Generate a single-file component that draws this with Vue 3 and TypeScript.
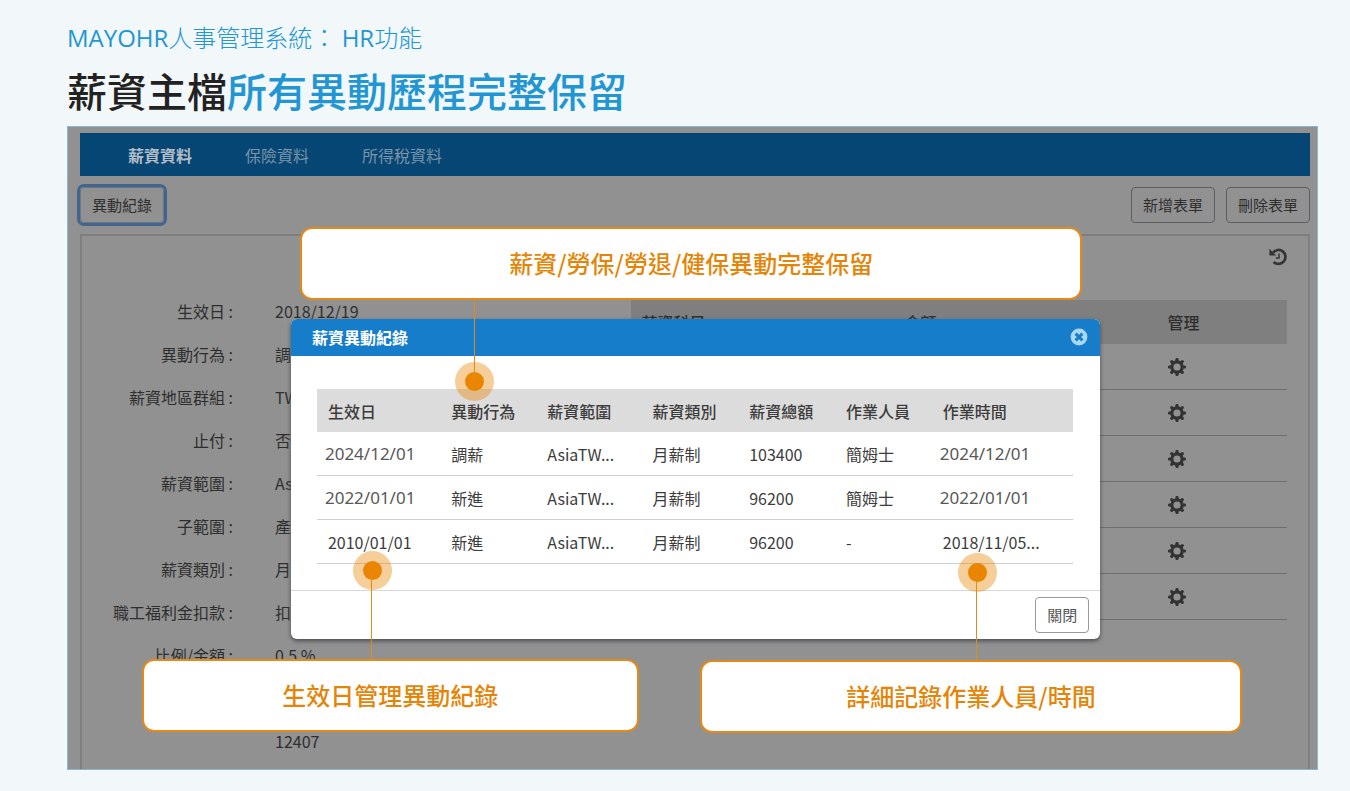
<script setup lang="ts">
interface Field {
  label: string
  value: string
}

interface SalaryRecord {
  effective: string
  action: string
  range: string
  type: string
  total: string
  operator: string
  time: string
  amended: boolean
}

const tabs: string[] = ['薪資資料', '保險資料', '所得稅資料']

const fields: Field[] = [
  { label: '生效日 :', value: '2018/12/19' },
  { label: '異動行為 :', value: '調薪' },
  { label: '薪資地區群組 :', value: 'TW' },
  { label: '止付 :', value: '否' },
  { label: '薪資範圍 :', value: 'AsiaTW' },
  { label: '子範圍 :', value: '產' },
  { label: '薪資類別 :', value: '月薪制' },
  { label: '職工福利金扣款 :', value: '扣' },
  { label: '比例/金額 :', value: '0.5 %' },
  { label: '', value: '' },
  { label: '', value: '12407' },
]

const columns: string[] = ['生效日', '異動行為', '薪資範圍', '薪資類別', '薪資總額', '作業人員', '作業時間']

const records: SalaryRecord[] = [
  { effective: '2024/12/01', action: '調薪', range: 'AsiaTW...', type: '月薪制', total: '103400', operator: '簡姆士', time: '2024/12/01', amended: true },
  { effective: '2022/01/01', action: '新進', range: 'AsiaTW...', type: '月薪制', total: '96200', operator: '簡姆士', time: '2022/01/01', amended: true },
  { effective: '2010/01/01', action: '新進', range: 'AsiaTW...', type: '月薪制', total: '96200', operator: '-', time: '2018/11/05...', amended: false },
]

const teeth: number[] = [0, 45, 90, 135, 180, 225, 270, 315]
</script>

<template>
  <main class="slide">
    <header class="heading">
      <p class="subtitle"><span class="latin">MAYOHR</span>人事管理系統： <span class="latin">HR</span>功能</p>
      <h1 class="title">薪資主檔<span class="accent">所有異動歷程完整保留</span></h1>
    </header>

    <section class="screen">
      <nav class="tabs">
        <a v-for="(tab, i) in tabs" :key="tab" href="#" class="tab" :class="{ active: i === 0 }">{{ tab }}</a>
      </nav>

      <div class="toolbar">
        <button type="button" class="btn focused">異動紀錄</button>
        <div class="toolbar-right">
          <button type="button" class="btn">新增表單</button>
          <button type="button" class="btn">刪除表單</button>
        </div>
      </div>

      <div class="card">
        <div class="card-top">
          <button type="button" class="icon-btn" aria-label="history">
            <svg width="18" height="18" viewBox="0 0 18 18" fill="none" stroke="#343434">
              <path d="M4 4.6A7 7 0 1 1 4.6 14" stroke-width="2.7" />
              <path d="M.4 .8v6.6h6.8z" fill="#343434" stroke="none" />
              <path d="M10 5.6v4.4H6.8" stroke-width="1.5" />
            </svg>
          </button>
        </div>
        <div class="card-body">
          <dl class="fields">
            <div v-for="(field, i) in fields" :key="i" class="field">
              <dt>{{ field.label }}</dt>
              <dd>{{ field.value }}</dd>
            </div>
          </dl>
          <table class="items">
            <thead>
              <tr>
                <th class="wide">薪資科目</th>
                <th class="wide">金額</th>
                <th>管理</th>
              </tr>
            </thead>
            <tbody>
              <tr v-for="n in 6" :key="n">
                <td></td>
                <td></td>
                <td>
                  <button type="button" class="icon-btn" aria-label="settings">
                    <svg width="18" height="18" viewBox="-9 -9 18 18" fill="none" stroke="#333">
                      <circle r="5.2" stroke-width="3.2" />
                      <path v-for="a in teeth" :key="a" d="M0 -6.2V-7.5" stroke-width="3.2" stroke-linecap="round" :transform="`rotate(${a})`" />
                    </svg>
                  </button>
                </td>
              </tr>
            </tbody>
          </table>
        </div>
      </div>

      <div class="modal" role="dialog" aria-labelledby="modal-title">
        <div class="modal-head">
          <h2 id="modal-title">薪資異動紀錄</h2>
          <button type="button" class="icon-btn" aria-label="close">
            <svg width="18" height="18" viewBox="0 0 18 18">
              <circle cx="9" cy="9" r="8.4" fill="#abd8f6" />
              <path d="M5.6 5.6l6.8 6.8M12.4 5.6l-6.8 6.8" stroke="#167dca" stroke-width="3" />
            </svg>
          </button>
        </div>
        <div class="modal-body">
          <table class="records">
            <colgroup>
              <col v-for="n in 7" :key="n" :class="`c${n}`" />
            </colgroup>
            <thead>
              <tr>
                <th v-for="c in columns" :key="c">{{ c }}</th>
              </tr>
            </thead>
            <tbody>
              <tr v-for="r in records" :key="r.effective">
                <td :class="{ amended: r.amended }">{{ r.effective }}</td>
                <td>{{ r.action }}</td>
                <td>{{ r.range }}</td>
                <td>{{ r.type }}</td>
                <td>{{ r.total }}</td>
                <td>{{ r.operator }}</td>
                <td :class="{ amended: r.amended }">{{ r.time }}</td>
              </tr>
            </tbody>
          </table>
        </div>
        <div class="modal-foot">
          <button type="button" class="btn close">關閉</button>
        </div>
      </div>

      <i class="pin up pin-action"></i>
      <i class="pin down pin-date"></i>
      <i class="pin down pin-time"></i>
      <div class="callout callout-action">薪資/勞保/勞退/健保異動完整保留</div>
      <div class="callout callout-date">生效日管理異動紀錄</div>
      <div class="callout callout-time">詳細記錄作業人員/時間</div>
    </section>
  </main>
</template>

<style>
body {
  margin: 0;
  background: #f2f8f9;
}
</style>

<style scoped>
.slide {
  box-sizing: border-box;
  min-height: 100vh;
  display: flex;
  flex-direction: column;
  padding: 21px 32px 21px 67px;
  background: #f2f8f9;
  color: #2e2e2e;
  font-family: "Noto Sans CJK TC", sans-serif;
  font-size: 16px;
  line-height: 24px;
}
.heading {
  margin-bottom: 8px;
}
.subtitle {
  margin: 0;
  color: #2296d3;
  font-size: 24px;
  line-height: 32px;
  font-weight: 300;
}
.latin {
  font-family: "Open Sans", sans-serif;
  font-weight: 400;
}
.title {
  margin: 8px 0 0;
  color: #222;
  font-size: 40px;
  line-height: 56px;
  font-weight: 500;
}
.accent {
  color: #2296d3;
}
.screen {
  position: relative;
  flex: 1;
  display: flex;
  flex-direction: column;
  overflow: hidden;
  padding: 6px 7px 0 12px;
  border: 1px solid #8db7c8;
  background: #919191;
}
.tabs {
  box-sizing: border-box;
  display: flex;
  align-items: center;
  gap: 53px;
  height: 43px;
  padding: 0 48px;
  background: #054674;
}
.tab {
  color: #7c94a8;
  text-decoration: none;
}
.tab.active {
  color: #b4bdc5;
  font-weight: 700;
}
.toolbar {
  display: flex;
  justify-content: space-between;
  padding: 11px 0;
}
.toolbar-right {
  display: flex;
  gap: 11px;
}
.btn {
  box-sizing: border-box;
  height: 36px;
  padding: 0 11px;
  border: 1px solid #5c5e62;
  border-radius: 4px;
  background: transparent;
  color: #2e2e2e;
  font: inherit;
  font-size: 15px;
}
.btn.focused {
  border-color: #6d7780;
  box-shadow: 0 0 0 3px #41658c;
}
.icon-btn {
  display: block;
  padding: 0;
  border: 0;
  background: none;
  line-height: 0;
}
.card {
  flex: 1;
  padding-right: 21px;
  border: 2px solid #7e7e7e;
  border-bottom: 0;
}
.card-top {
  display: flex;
  align-items: flex-start;
  justify-content: flex-end;
  height: 41px;
  padding-top: 12px;
}
.card-body {
  display: grid;
  grid-template-columns: 45.6% 1fr;
  align-items: start;
}
.fields {
  margin: 0;
}
.field {
  display: flex;
  gap: 42px;
  height: 43px;
  align-items: center;
}
.field dt {
  width: 151px;
  text-align: right;
}
.field dd {
  margin: 0;
}
table {
  width: 100%;
  border-collapse: collapse;
  table-layout: fixed;
}
th {
  padding: 0;
  text-align: left;
  font-weight: 500;
}
td {
  padding: 0;
}
.items {
  margin-top: 11px;
}
.items th {
  height: 44px;
  padding-left: 10px;
  background: #7f7f7f;
}
.items .wide {
  width: 38.6%;
}
.items td {
  height: 45px;
  padding-left: 10px;
  border-bottom: 1px solid #6e6e6e;
}
.modal {
  position: absolute;
  top: 192px;
  left: 17.85%;
  width: 64.8%;
  overflow: hidden;
  border-radius: 6px;
  background: #fff;
  color: #3c3c3c;
  box-shadow: 0 2px 4px #4a4d52;
}
.modal-head {
  box-sizing: border-box;
  display: flex;
  align-items: center;
  justify-content: space-between;
  height: 37px;
  padding: 0 12px 1px 21px;
  background: #167dca;
}
.modal-head h2 {
  margin: 0;
  color: #fff;
  font-size: 16px;
  line-height: 24px;
  font-weight: 700;
}
.modal-body {
  padding: 33px 27px 26px 26px;
}
.records .c1 { width: 16.3%; }
.records .c2 { width: 12.7%; }
.records .c3 { width: 13.9%; }
.records .c4,
.records .c5,
.records .c6 { width: 12.8%; }
.records th {
  height: 43px;
  padding-left: 11px;
  background: #dcdcdc;
}
.records td {
  height: 43px;
  padding-left: 11px;
  border-bottom: 1px solid #cfcfcf;
}
.records td.amended {
  padding-left: 8px;
  color: #585858;
  font-family: "Noto Sans", sans-serif;
  font-size: 17px;
}
.modal-foot {
  display: flex;
  justify-content: flex-end;
  padding: 6px 11px;
  border-top: 1px solid #d8d8d8;
}
.btn.close {
  border-color: #999;
  color: #555;
}
.callout {
  position: absolute;
  box-sizing: border-box;
  height: 73px;
  display: flex;
  align-items: center;
  justify-content: center;
  padding-bottom: 2px;
  border: 2px solid #e28a1a;
  border-radius: 12px;
  background: #fff;
  color: #e58508;
  font-size: 24px;
  line-height: 36px;
  font-weight: 500;
}
.callout-action {
  top: 100px;
  left: 18.6%;
  width: 62.6%;
}
.callout-date {
  top: 532px;
  left: 5.9%;
  width: 39.8%;
}
.callout-time {
  top: 533px;
  left: 50.6%;
  width: 43.4%;
}
.pin {
  position: absolute;
  width: 39px;
  height: 39px;
  border-radius: 50%;
  background: rgba(233, 133, 0, 0.4);
}
.pin::before {
  content: "";
  position: absolute;
  inset: 10px;
  border-radius: 50%;
  background: #e98500;
}
.pin::after {
  content: "";
  position: absolute;
  width: 1px;
  height: 90px;
  background: #e28a1a;
}
.pin.up::after {
  left: 19px;
  bottom: 20px;
}
.pin.down::after {
  left: 18px;
  top: 20px;
}
.pin-action {
  top: 235px;
  left: 31%;
}
.pin-date {
  top: 424px;
  left: 22.8%;
}
.pin-time {
  top: 426px;
  left: 71.25%;
}
</style>
